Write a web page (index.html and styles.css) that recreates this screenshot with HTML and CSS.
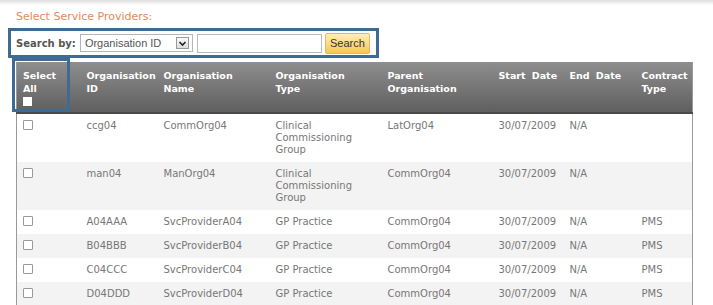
FILE: index.html
```html
<!DOCTYPE html>
<html lang="en">
<head>
    <meta charset="UTF-8">
    <title>Select Service Providers</title>
    <link rel="stylesheet" href="styles.css">
</head>
<body>
    <div class="topbar"></div>
    <div class="page">
        <h2 class="title">Select Service Providers:</h2>
        <div class="search-box">
            <label class="search-label">Search by:</label>
            <div class="select">
                <span class="select-text">Organisation ID</span>
                <span class="select-arrow">
                    <svg width="11" height="9" viewBox="0 0 11 9"><path d="M2.5 3 L5.5 6 L8.5 3" fill="none" stroke="#222" stroke-width="1.6"/></svg>
                </span>
            </div>
            <input class="search-input" type="text">
            <button class="search-btn">Search</button>
        </div>

        <div class="grid-wrap">
            <table class="grid">
                <colgroup>
                    <col class="c-sel">
                    <col class="c-id">
                    <col class="c-name">
                    <col class="c-type">
                    <col class="c-parent">
                    <col class="c-start">
                    <col class="c-end">
                    <col class="c-contract">
                </colgroup>
                <thead>
                    <tr>
                        <th>Select<br>All<br><span class="hcheck"></span></th>
                        <th>Organisation ID</th>
                        <th>Organisation Name</th>
                        <th>Organisation Type</th>
                        <th>Parent Organisation</th>
                        <th class="nowrap">Start Date</th>
                        <th class="nowrap">End Date</th>
                        <th>Contract Type</th>
                    </tr>
                </thead>
                <tbody>
                    <tr>
                        <td><span class="check"></span></td>
                        <td>ccg04</td>
                        <td>CommOrg04</td>
                        <td>Clinical<br>Commissioning<br>Group</td>
                        <td>LatOrg04</td>
                        <td>30/07/2009</td>
                        <td>N/A</td>
                        <td></td>
                    </tr>
                    <tr class="alt">
                        <td><span class="check"></span></td>
                        <td>man04</td>
                        <td>ManOrg04</td>
                        <td>Clinical<br>Commissioning<br>Group</td>
                        <td>CommOrg04</td>
                        <td>30/07/2009</td>
                        <td>N/A</td>
                        <td></td>
                    </tr>
                    <tr>
                        <td><span class="check"></span></td>
                        <td>A04AAA</td>
                        <td>SvcProviderA04</td>
                        <td>GP Practice</td>
                        <td>CommOrg04</td>
                        <td>30/07/2009</td>
                        <td>N/A</td>
                        <td>PMS</td>
                    </tr>
                    <tr class="alt">
                        <td><span class="check"></span></td>
                        <td>B04BBB</td>
                        <td>SvcProviderB04</td>
                        <td>GP Practice</td>
                        <td>CommOrg04</td>
                        <td>30/07/2009</td>
                        <td>N/A</td>
                        <td>PMS</td>
                    </tr>
                    <tr>
                        <td><span class="check"></span></td>
                        <td>C04CCC</td>
                        <td>SvcProviderC04</td>
                        <td>GP Practice</td>
                        <td>CommOrg04</td>
                        <td>30/07/2009</td>
                        <td>N/A</td>
                        <td>PMS</td>
                    </tr>
                    <tr class="alt">
                        <td><span class="check"></span></td>
                        <td>D04DDD</td>
                        <td>SvcProviderD04</td>
                        <td>GP Practice</td>
                        <td>CommOrg04</td>
                        <td>30/07/2009</td>
                        <td>N/A</td>
                        <td>PMS</td>
                    </tr>
                </tbody>
            </table>
            <div class="mark"></div>
        </div>
    </div>
</body>
</html>
```

FILE: styles.css
```css
body {
    margin: 0;
    padding: 0;
    background: #fff;
    font-family: "DejaVu Sans", Verdana, sans-serif;
    overflow: hidden;
}
.topbar {
    height: 5px;
    background: linear-gradient(#dcdcdc, #fff);
}
.page {
    padding-left: 8px;
}
.title {
    margin: 0 0 0 8px;
    padding-top: 5px;
    font-size: 11px;
    line-height: 14px;
    font-weight: normal;
    color: #e5895a;
}
.search-box {
    margin-top: 4px;
    width: 371px;
    height: 30px;
    box-sizing: border-box;
    border: 3px solid #3e6a93;
    display: flex;
    align-items: center;
    padding-left: 5px;
}
.search-label {
    font-size: 10px;
    font-weight: bold;
    color: #555;
    margin-right: 4px;
}
.select {
    width: 113px;
    height: 18px;
    box-sizing: border-box;
    border: 1px solid #b5b5b5;
    display: flex;
    align-items: center;
    justify-content: space-between;
    padding: 0 3px 0 4px;
}
.select-text {
    font-family: "Liberation Sans", Arial, sans-serif;
    font-size: 11px;
    color: #555;
}
.select-arrow {
    width: 13px;
    height: 12px;
    box-sizing: border-box;
    border: 1px solid #999;
    background: linear-gradient(#fafafa, #ddd);
    display: flex;
    align-items: center;
    justify-content: center;
}
.search-input {
    width: 125px;
    height: 19px;
    box-sizing: border-box;
    border: 1px solid #bbb;
    margin: 0 0 0 4px;
    padding: 0;
}
.search-btn {
    width: 45px;
    height: 21px;
    margin-left: 3px;
    border: 1px solid #e3b861;
    border-radius: 2px;
    background: linear-gradient(#fff0b8, #f6c650);
    font-family: "Liberation Sans", Arial, sans-serif;
    font-size: 11px;
    color: #333;
    padding: 0;
}
.grid-wrap {
    position: relative;
    margin: 4px 0 0 8px;
    width: 676px;
}
.grid {
    width: 676px;
    table-layout: fixed;
    border-collapse: collapse;
    border-left: 1px solid #999;
    border-right: 1px solid #999;
}
.c-sel { width: 64px; }
.c-id { width: 77px; }
.c-name { width: 112px; }
.c-type { width: 112px; }
.c-parent { width: 111px; }
.c-start { width: 71px; }
.c-end { width: 72px; }
.c-contract { width: 57px; }
.grid th {
    height: 51px;
    box-sizing: border-box;
    padding: 7px 6px 0;
    vertical-align: top;
    text-align: left;
    font-size: 9.5px;
    line-height: 13px;
    font-weight: bold;
    word-spacing: 3px;
    color: #fff;
    background: linear-gradient(#8e8e8e, #5f5f5f);
    border-bottom: 2px solid #4a4a4a;
}
.grid th.nowrap {
    white-space: nowrap;
}
.hcheck {
    display: inline-block;
    width: 9px;
    height: 9px;
    background: #fff;
    margin-top: 2px;
}
.grid td {
    padding: 6px 6px;
    vertical-align: top;
    font-size: 10px;
    line-height: 12px;
    color: #777;
}
.grid tr.alt td {
    background: #f3f3f3;
}
.check {
    display: inline-block;
    width: 10px;
    height: 10px;
    box-sizing: border-box;
    border: 1px solid #999;
    border-radius: 1px;
    background: #fff;
    vertical-align: top;
}
.mark {
    position: absolute;
    left: -4px;
    top: -4px;
    width: 58px;
    height: 54px;
    box-sizing: border-box;
    border: 3px solid #3e6a93;
}
```
